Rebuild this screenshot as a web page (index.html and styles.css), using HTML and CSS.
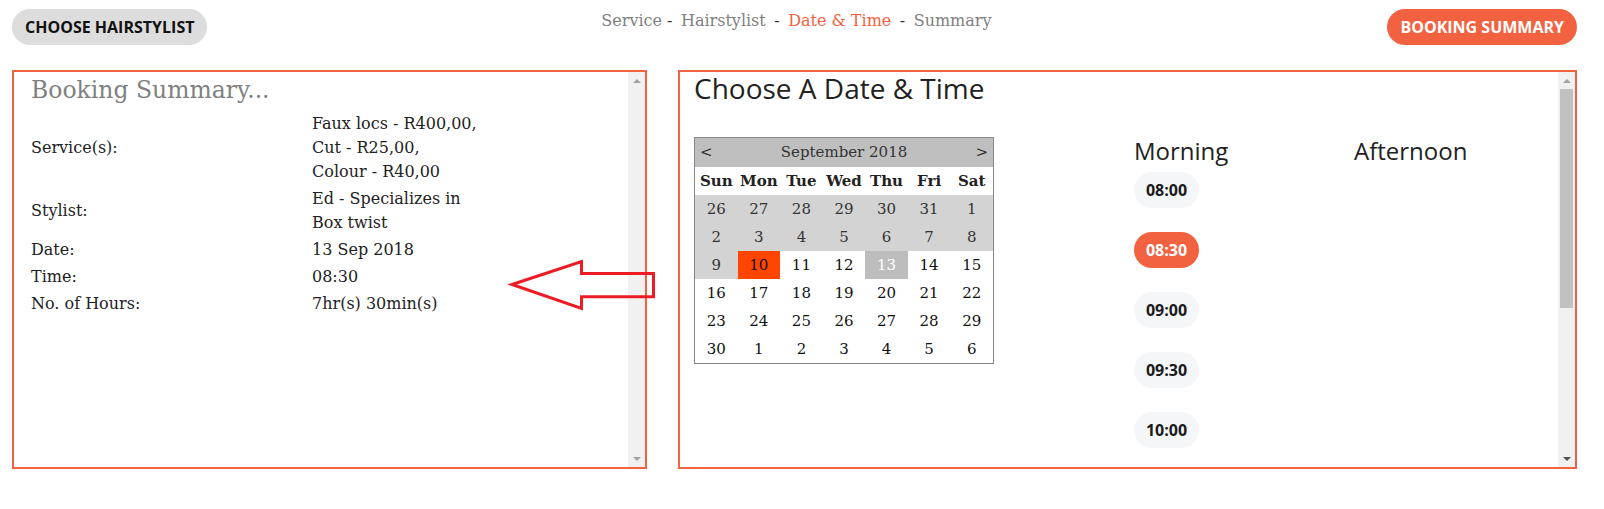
FILE: index.html
```html
<!DOCTYPE html>
<html lang="en">
<head>
<meta charset="utf-8">
<title>Choose A Date &amp; Time</title>
<link rel="stylesheet" href="styles.css">
</head>
<body>
<div class="page">
  <header class="topbar">
    <button class="pill pill-grey">CHOOSE HAIRSTYLIST</button>
    <nav class="steps">
      <span class="step">Service</span><span class="sep sep-first">-</span><span class="step">Hairstylist</span><span class="sep">-</span><span class="step step-active">Date &amp; Time</span><span class="sep">-</span><span class="step">Summary</span>
    </nav>
    <button class="pill pill-orange">BOOKING SUMMARY</button>
  </header>

  <main class="panels">
    <section class="panel summary-panel">
      <div class="panel-body summary-body">
        <h2 class="summary-title">Booking Summary...</h2>
        <table class="summary-table">
          <tr><td class="label">Service(s):</td><td class="value">Faux locs - R400,00,<br>Cut - R25,00,<br>Colour - R40,00</td></tr>
          <tr><td class="label">Stylist:</td><td class="value">Ed - Specializes in<br>Box twist</td></tr>
          <tr><td class="label">Date:</td><td class="value">13 Sep 2018</td></tr>
          <tr><td class="label">Time:</td><td class="value">08:30</td></tr>
          <tr><td class="label">No. of Hours:</td><td class="value">7hr(s) 30min(s)</td></tr>
        </table>
      </div>
      <div class="scrollbar">
        <div class="sb-btn"><span class="tri tri-up"></span></div>
        <div class="sb-track"></div>
        <div class="sb-btn"><span class="tri tri-down"></span></div>
      </div>
    </section>

    <section class="panel picker-panel">
      <div class="panel-body picker-body">
        <h1 class="picker-title">Choose A Date &amp; Time</h1>
        <div class="picker-grid">
          <div class="cal-col">
            <table class="cal">
              <tr class="cal-head"><td colspan="7"><div class="cal-head-inner"><span>&lt;</span><span>September 2018</span><span>&gt;</span></div></td></tr>
              <tr class="cal-days"><th>Sun</th><th>Mon</th><th>Tue</th><th>Wed</th><th>Thu</th><th>Fri</th><th>Sat</th></tr>
              <tr><td class="off">26</td><td class="off">27</td><td class="off">28</td><td class="off">29</td><td class="off">30</td><td class="off">31</td><td class="off">1</td></tr>
              <tr><td class="off">2</td><td class="off">3</td><td class="off">4</td><td class="off">5</td><td class="off">6</td><td class="off">7</td><td class="off">8</td></tr>
              <tr><td class="off">9</td><td class="today">10</td><td>11</td><td>12</td><td class="picked">13</td><td>14</td><td>15</td></tr>
              <tr><td>16</td><td>17</td><td>18</td><td>19</td><td>20</td><td>21</td><td>22</td></tr>
              <tr><td>23</td><td>24</td><td>25</td><td>26</td><td>27</td><td>28</td><td>29</td></tr>
              <tr><td>30</td><td>1</td><td>2</td><td>3</td><td>4</td><td>5</td><td>6</td></tr>
            </table>
          </div>
          <div class="slot-col">
            <h3 class="slot-title">Morning</h3>
            <button class="slot">08:00</button>
            <button class="slot slot-active">08:30</button>
            <button class="slot">09:00</button>
            <button class="slot">09:30</button>
            <button class="slot">10:00</button>
            <button class="slot">10:30</button>
            <button class="slot">11:00</button>
            <button class="slot">11:30</button>
            <button class="slot">12:00</button>
          </div>
          <div class="slot-col">
            <h3 class="slot-title">Afternoon</h3>
          </div>
        </div>
      </div>
      <div class="scrollbar">
        <div class="sb-btn"><span class="tri tri-up"></span></div>
        <div class="sb-track"><div class="sb-thumb"></div></div>
        <div class="sb-btn"><span class="tri tri-down tri-dark"></span></div>
      </div>
    </section>

    <svg class="arrow" width="180" height="70" viewBox="0 0 180 70" aria-hidden="true">
      <polygon points="20,34.5 89.5,11.5 89.5,23.5 161.5,23.5 161.5,46.8 89.5,46.8 89.5,58.5" fill="none" stroke="#ed1c24" stroke-width="3"/>
    </svg>
  </main>
</div>
</body>
</html>
```

FILE: styles.css
```css
* { box-sizing: border-box; }

html, body {
  margin: 0;
  padding: 0;
  background: #ffffff;
}

body {
  font-family: "DejaVu Serif", "Liberation Serif", serif;
  font-size: 16px;
  color: #222222;
}

.page {
  padding: 9px 27px 0 12px;
}

/* ---------- top bar ---------- */
.topbar {
  display: flex;
  justify-content: space-between;
  align-items: flex-start;
  height: 61px;
}

.pill {
  font-family: "Open Sans", "Liberation Sans", sans-serif;
  font-weight: 700;
  font-size: 16px;
  height: 36px;
  line-height: 36px;
  padding: 0 13px;
  border: none;
  border-radius: 18px;
  white-space: nowrap;
  cursor: pointer;
}

.pill-grey {
  background: #dddddd;
  color: #111111;
}

.pill-orange {
  background: #f26241;
  color: #ffffff;
}

.steps {
  font-family: "DejaVu Serif", "Liberation Serif", serif;
  font-size: 16px;
  line-height: 24px;
  white-space: nowrap;
  margin-left: -2px;
}

.step { color: #7f7f7f; }
.step-active { color: #f26241; }

.sep {
  color: #333333;
  margin: 0 8.5px;
}
.sep-first { margin-left: 5px; }

/* ---------- panels ---------- */
.panels {
  position: relative;
  display: grid;
  grid-template-columns: 635px 899px;
  column-gap: 31px;
}

.panel {
  height: 399px;
  border: 2px solid #f26241;
  display: flex;
  overflow: hidden;
}

.panel-body {
  flex: 1;
  min-width: 0;
  overflow: hidden;
}

/* fake classic scrollbar */
.scrollbar {
  width: 17px;
  flex: none;
  display: flex;
  flex-direction: column;
  background: #f1f1f1;
}

.sb-btn {
  height: 17px;
  display: flex;
  align-items: center;
  justify-content: center;
}

.sb-track {
  flex: 1;
  padding: 0 2px;
}

.sb-thumb {
  height: 219px;
  background: #c1c1c1;
}

.tri {
  width: 0;
  height: 0;
  border-left: 4px solid transparent;
  border-right: 4px solid transparent;
}
.tri-up { border-bottom: 4px solid #a3a3a3; }
.tri-down { border-top: 4px solid #a3a3a3; }
.tri-down.tri-dark { border-top-color: #505050; }

/* ---------- summary ---------- */
.summary-body {
  padding: 6px 17px 0 17px;
}

.summary-title {
  margin: 0 0 7px;
  font-family: "DejaVu Serif", "Liberation Serif", serif;
  font-weight: 400;
  font-size: 23.5px;
  line-height: 1.1;
  color: #808080;
}

.summary-table {
  border-collapse: collapse;
  font-size: 16px;
  line-height: 24px;
  color: #222222;
}

.summary-table td {
  padding: 1.5px 0;
  vertical-align: middle;
}

.summary-table .label { width: 281px; }

/* ---------- picker ---------- */
.picker-body {
  padding: 1px 0 0 14px;
}

.picker-title {
  margin: 0 0 33px;
  font-family: "Open Sans", "Liberation Sans", sans-serif;
  font-weight: 400;
  font-size: 28px;
  line-height: 1.1;
  color: #222222;
}

.picker-grid {
  display: grid;
  grid-template-columns: 440px 220px 1fr;
  align-items: start;
}

.cal {
  width: 300px;
  border: 1px solid #888888;
  border-collapse: separate;
  border-spacing: 0;
  table-layout: fixed;
  font-family: "DejaVu Serif", "Liberation Serif", serif;
  font-size: 15px;
  color: #111111;
}

.cal td, .cal th {
  height: 28px;
  padding: 0;
  text-align: center;
  vertical-align: middle;
}

.cal-head td {
  height: 29px;
  background: #bfbfbf;
  color: #333333;
}

.cal-head-inner {
  display: flex;
  justify-content: space-between;
  align-items: center;
  padding: 0 5px;
}

.cal-days th {
  font-weight: 700;
  color: #222222;
  background: #ffffff;
}

.cal td.off { background: #d3d3d3; color: #333333; }
.cal td.today { background: #ff4500; color: #111111; }
.cal td.picked { background: #bdbdbd; color: #ffffff; }

.slot-col {
  display: flex;
  flex-direction: column;
  align-items: flex-start;
}

.slot-title {
  margin: 1px 0 8px;
  font-family: "Open Sans", "Liberation Sans", sans-serif;
  font-weight: 400;
  font-size: 24px;
  line-height: 1.1;
  color: #222222;
}

.slot {
  width: 65px;
  height: 36px;
  margin: 0 0 24px;
  padding: 0;
  border: none;
  border-radius: 18px;
  background: #f5f6f8;
  color: #1a1a1a;
  font-family: "Open Sans", "Liberation Sans", sans-serif;
  font-weight: 700;
  font-size: 16px;
  line-height: 36px;
  text-align: center;
  cursor: pointer;
}

.slot-active {
  background: #f26241;
  color: #ffffff;
}

/* ---------- annotation arrow (overlay) ---------- */
.arrow {
  position: absolute;
  left: 480px;
  top: 180px;
  pointer-events: none;
  overflow: visible;
}
```
